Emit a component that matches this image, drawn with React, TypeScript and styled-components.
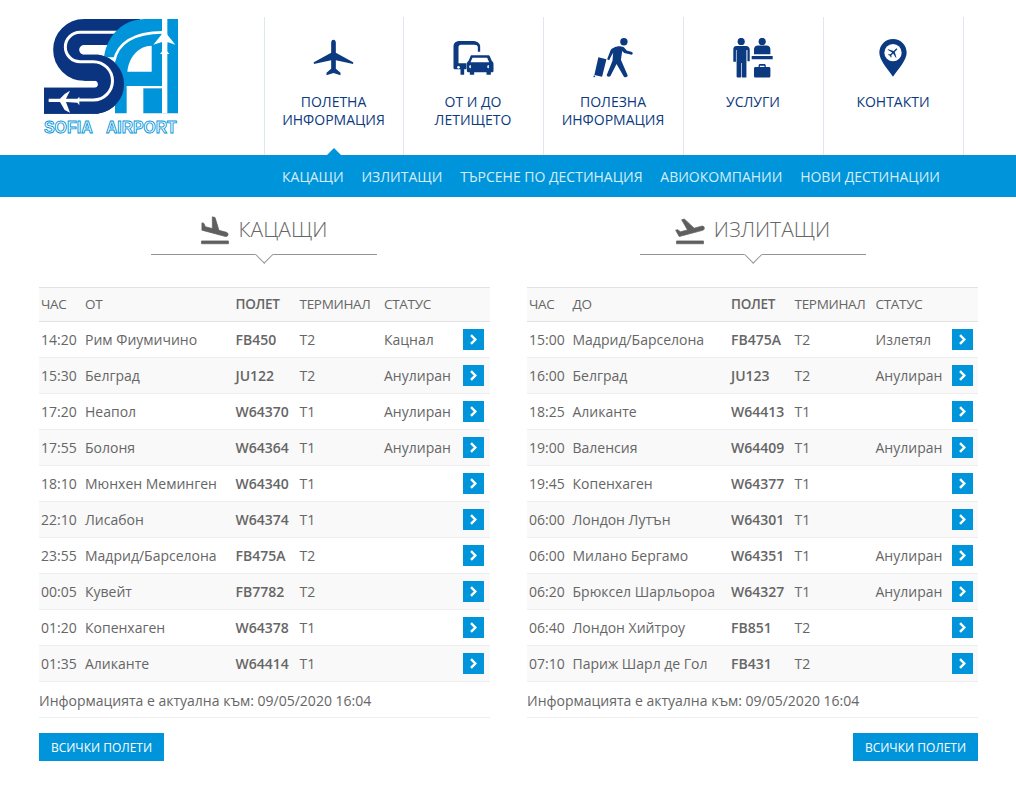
import React from "react";
import styled, { createGlobalStyle } from "styled-components";
import { MdFlightLand, MdFlightTakeoff } from "react-icons/md";

const Global = createGlobalStyle`
  html, body { margin: 0; padding: 0; background: #fff; }
  body { font-family: "Open Sans", "Liberation Sans", sans-serif; color: #666; }
  * { box-sizing: border-box; }
`;

const NAVY = "#0c3a80";
const BLUE = "#0095da";

const Page = styled.div`width: 1016px; height: 797px; overflow: hidden;`;
const Header = styled.header`display: flex; height: 155px;`;
const LogoBox = styled.a`width: 264px; padding: 19px 0 0 44px; display: block;`;
const MainNav = styled.nav`display: flex; padding-top: 17px; height: 155px;`;
const NavCell = styled.a<{ $active?: boolean; $first?: boolean; $last?: boolean }>`
  position: relative;
  width: ${(p) => (p.$first ? 139 : p.$last ? 141 : 140)}px;
  padding: 21px 1px 0 0;
  border-left: 1px solid #dfe7ee;
  ${(p) => (p.$last ? "border-right: 1px solid #dfe7ee;" : "")}
  text-align: center;
  font-size: 14px;
  line-height: 18px;
  color: ${NAVY};
  ${(p) =>
    p.$active
      ? `&::after { content: ""; position: absolute; left: 62px; bottom: 0; border: 7px solid transparent; border-top: 0; border-bottom-color: ${BLUE}; }`
      : ""}
`;
const IconSlot = styled.div`
  height: 42px;
  margin-bottom: 13px;
  display: flex;
  justify-content: center;
  align-items: flex-start;
`;
const SubNav = styled.nav`
  height: 42px;
  background: ${BLUE};
  display: flex;
  align-items: center;
  gap: 17.75px;
  padding-left: 282px;
  font-size: 14px;
  color: #d5edf9;
`;
const Columns = styled.main`
  display: grid;
  grid-template-columns: 451px 451px;
  column-gap: 37px;
  padding-left: 39px;
`;
const Column = styled.section``;
const TitleBlock = styled.div<{ $inset: number }>`
  height: 90px;
  padding-top: 18px;
  margin-left: ${(p) => p.$inset}px;
  width: 226px;
`;
const Title = styled.h2`
  margin: 0;
  height: 28px;
  padding-right: 3px;
  display: flex;
  justify-content: center;
  align-items: center;
  gap: 7px;
  font-size: 21px;
  font-weight: 300;
  line-height: 28px;
  color: #666;
  white-space: nowrap;
  svg { color: #5f5f5f; flex: none; margin-top: 3px; }
  svg path:not([fill="none"]) { stroke: #5f5f5f; stroke-width: 0.5px; }
`;
const Divider = styled.div`
  position: relative;
  height: 8px;
  margin-top: 11px;
  border-top: 1px solid #949494;
  &::after {
    content: "";
    position: absolute;
    left: 107px;
    top: -7px;
    width: 11.5px;
    height: 11.5px;
    background: #fff;
    transform: rotate(45deg);
    border-right: 1px solid #949494;
    border-bottom: 1px solid #949494;
  }
`;
const Row = styled.div<{ $cols: string; $shade?: boolean }>`
  display: grid;
  grid-template-columns: ${(p) => p.$cols};
  align-items: center;
  height: 36px;
  padding-left: 2px;
  border-bottom: 1px solid #eeeeee;
  background: ${(p) => (p.$shade ? "#f9f9f9" : "#fff")};
  font-size: 14px;
  color: #666;
  white-space: nowrap;
`;
const HeadRow = styled(Row)`
  height: 35px;
  padding-bottom: 1px;
  background: #f9f9f9;
  border-top: 1px solid #e2e2e2;
  border-bottom: 1px solid #e2e2e2;
  font-size: 13.5px;
  letter-spacing: -0.3px;
`;
const Flight = styled.span`font-weight: 600;`;
const Arrow = styled.a`
  width: 21px;
  height: 21px;
  background: ${BLUE};
  display: flex;
  align-items: center;
  justify-content: center;
  margin-bottom: 1px;
`;
const Updated = styled.div`
  height: 36px;
  padding-top: 1px;
  display: flex;
  align-items: center;
  border-bottom: 1px solid #eeeeee;
  font-size: 14px;
  color: #666;
`;
const Actions = styled.div<{ $end?: boolean }>`
  display: flex;
  justify-content: ${(p) => (p.$end ? "flex-end" : "flex-start")};
  padding-top: 15px;
`;
const AllButton = styled.a`
  width: 125px;
  height: 28px;
  background: ${BLUE};
  color: #fff;
  font-size: 12px;
  display: flex;
  align-items: center;
  justify-content: center;
`;

const Logo = () => (
  <svg width="134" height="117" viewBox="42 57 402 351" aria-label="Sofia Airport">
    <path d="M330 96H162A53 53 0 0 0 162 203H200A50 50 0 0 1 200 302H42" fill="none" stroke="#0a3380" strokeWidth="78" />
    <path d="M262 97H150A44 44 0 0 0 150 185" fill="none" stroke="#fff" strokeWidth="9" />
    <path d="M222 172C232 100 285 57 345 57H444V340H340V262H290V340H255V172Z" fill={BLUE} />
    <path d="M292 215C296 172 325 137 365 137V215Z" fill="#fff" />
    <path d="M252 184C262 130 310 97 398 97" fill="none" stroke="#fff" strokeWidth="8" />
    <rect x="396" y="57" width="16" height="283" fill="#fff" />
    <rect x="290" y="258" width="106" height="7" fill="#fff" />
    <path d="M404 70L412 104L436 134L412 126L410 152L418 162L390 162L398 152L396 126L370 134L394 104Z" fill="#fff" />
    <path d="M162 203H200A50 50 0 0 1 200 302H42" fill="none" stroke="#0a3380" strokeWidth="78" />
    <path d="M150 185H190A57.5 57.5 0 0 1 190 300H146" fill="none" stroke="#fff" strokeWidth="9" />
    <path d="M148 290V316L142 308L108 306L120 338L104 330L90 306H56V296H90L104 282L120 272L108 296L142 296Z" fill="#fff" />
    <text x="42" y="400" fontFamily="Liberation Sans, sans-serif" fontWeight="700" fontSize="47" fill="#fff" stroke={BLUE} strokeWidth="2.6" textLength="146" lengthAdjust="spacingAndGlyphs">SOFIA</text>
    <text x="228" y="400" fontFamily="Liberation Sans, sans-serif" fontWeight="700" fontSize="47" fill="#fff" stroke={BLUE} strokeWidth="2.6" textLength="212" lengthAdjust="spacingAndGlyphs">AIRPORT</text>
  </svg>
);

const PlaneIcon = () => (
  <svg width="41" height="40" viewBox="160 85 122 120">
    <path fill={NAVY} d="M221 90c-5 0-7 5-7 9v30l-52 29v5l52-11v25l-14 12v8l21-7 21 7v-8l-14-12v-25l52 11v-5l-52-29v-30c0-4-2-9-7-9z" />
  </svg>
);

const TransferIcon = () => (
  <svg width="43" height="38" viewBox="575 84 128 114">
    <path fill={NAVY} fillRule="evenodd" d="M579 110c0-12 8-17 20-17h36c14 0 22 6 24 14v18h-7v-14c-1-5-4-7-10-7h-41c-4 0-7 3-7 7v49h24v15c0 2-1 3-3 3h-4v16h-11v-16h-16c-3 0-5-2-5-4z" />
    <circle cx="594" cy="172" r="4" fill="#fff" />
    <path fill={NAVY} fillRule="evenodd" d="M633 136h50c3 0 5 2 6 5l5 12c3 2 5 5 5 9v20c0 3-2 5-5 5h-3v7h-13v-7h-37v7h-13v-7h-3c-3 0-6-2-6-5v-20c0-4 2-7 5-9l5-12c1-3 2-5 4-5zm3 7-6 14h56l-6-14zm-5 22a5 5 0 1 0 0.1 10.1zm54 0a5 5 0 1 0 0.1 10.1z" />
  </svg>
);

const WalkerIcon = () => (
  <svg width="41" height="41" viewBox="1000 84 122 122">
    <circle cx="1092" cy="95" r="11" fill={NAVY} />
    <path fill={NAVY} d="M1062 113c6-4 20-6 28-2 4 2 6 6 10 10l16 5c3 1 3 8-1 8l-22-5-6-6-4 26 20 46c1 5-7 8-11 4l-22-38-18 36c-3 4-12 2-11-3l17-42 2-24-6 10-6 12-6-3 10-26c2-4 5-6 10-8z" />
    <path fill={NAVY} d="M1016 141l24 6-13 52-23-5zM1003 194l4 6-6 1z" />
  </svg>
);

const ServicesIcon = () => (
  <svg width="42" height="41" viewBox="155 84 128 124">
    <circle cx="183" cy="94" r="11" fill={NAVY} />
    <path fill={NAVY} d="M168 108h30c6 0 11 4 11 10v36h-7v-34h-3v82c0 2-3 2-5 2h-6c-3 0-3-2-3-4v-40h-2v40c0 2 0 4-3 4h-7c-2 0-4-1-4-3v-81h-2v36h-8v-38c0-6 3-10 9-10z" />
    <circle cx="247" cy="94" r="11" fill={NAVY} />
    <path fill={NAVY} d="M234 106h26c7 0 12 5 12 12v15h-50v-15c0-7 5-12 12-12zM215 138h64v10h-64z" />
    <path fill={NAVY} fillRule="evenodd" d="M236 172v-4c0-3 2-5 5-5h12c3 0 5 2 5 5v4h9c3 0 5 2 5 5v22c0 3-2 5-5 5h-40c-3 0-5-2-5-5v-22c0-3 2-5 5-5zm4 0h14v-4h-14z" />
  </svg>
);

const PinIcon = () => (
  <svg width="28" height="39" viewBox="596 85 84 117">
    <path fill={NAVY} d="M638 88c23 0 41 18 41 41 0 22-25 49-41 72-16-23-41-50-41-72 0-23 18-41 41-41z" />
    <circle cx="638" cy="129" r="26" fill="#fff" />
    <path fill={NAVY} transform="rotate(45 638 129) translate(638 129) scale(.3) translate(-221 -147)" d="M221 90c-5 0-7 5-7 9v30l-52 29v5l52-11v25l-14 12v8l21-7 21 7v-8l-14-12v-25l52 11v-5l-52-29v-30c0-4-2-9-7-9z" />
  </svg>
);

const Chevron = () => (
  <svg width="9" height="11" viewBox="0 0 9 11">
    <path d="M2 1.2L6.3 5.5L2 9.8" fill="none" stroke="#fff" strokeWidth="2.4" />
  </svg>
);

type Item = [string, string, string, string, string];

const arrivals: Item[] = [
  ["14:20", "Рим Фиумичино", "FB450", "T2", "Кацнал"],
  ["15:30", "Белград", "JU122", "T2", "Анулиран"],
  ["17:20", "Неапол", "W64370", "T1", "Анулиран"],
  ["17:55", "Болоня", "W64364", "T1", "Анулиран"],
  ["18:10", "Мюнхен Меминген", "W64340", "T1", ""],
  ["22:10", "Лисабон", "W64374", "T1", ""],
  ["23:55", "Мадрид/Барселона", "FB475A", "T2", ""],
  ["00:05", "Кувейт", "FB7782", "T2", ""],
  ["01:20", "Копенхаген", "W64378", "T1", ""],
  ["01:35", "Аликанте", "W64414", "T1", ""],
];

const departures: Item[] = [
  ["15:00", "Мадрид/Барселона", "FB475A", "T2", "Излетял"],
  ["16:00", "Белград", "JU123", "T2", "Анулиран"],
  ["18:25", "Аликанте", "W64413", "T1", ""],
  ["19:00", "Валенсия", "W64409", "T1", "Анулиран"],
  ["19:45", "Копенхаген", "W64377", "T1", ""],
  ["06:00", "Лондон Лутън", "W64301", "T1", ""],
  ["06:00", "Милано Бергамо", "W64351", "T1", "Анулиран"],
  ["06:20", "Брюксел Шарльороа", "W64327", "T1", "Анулиран"],
  ["06:40", "Лондон Хийтроу", "FB851", "T2", ""],
  ["07:10", "Париж Шарл де Гол", "FB431", "T2", ""],
];

type BoardProps = { title: string; icon: React.ReactNode; place: string; cols: string; items: Item[]; end?: boolean; inset: number };

const Board = ({ title, icon, place, cols, items, end, inset }: BoardProps) => (
  <Column>
    <TitleBlock $inset={inset}>
      <Title>{icon}{title}</Title>
      <Divider />
    </TitleBlock>
    <HeadRow $cols={cols}>
      <span>ЧАС</span><span>{place}</span><Flight>ПОЛЕТ</Flight><span>ТЕРМИНАЛ</span><span>СТАТУС</span><span />
    </HeadRow>
    {items.map((r, i) => (
      <Row key={r[2]} $cols={cols} $shade={i % 2 === 1}>
        <span>{r[0]}</span><span>{r[1]}</span><Flight>{r[2]}</Flight><span>{r[3]}</span><span>{r[4]}</span>
        <Arrow><Chevron /></Arrow>
      </Row>
    ))}
    <Updated>Информацията е актуална към: 09/05/2020 16:04</Updated>
    <Actions $end={end}><AllButton>ВСИЧКИ ПОЛЕТИ</AllButton></Actions>
  </Column>
);

export default function App() {
  return (
    <Page>
      <Global />
      <Header>
        <LogoBox><Logo /></LogoBox>
        <MainNav>
          <NavCell $first $active><IconSlot><PlaneIcon /></IconSlot>ПОЛЕТНА<br />ИНФОРМАЦИЯ</NavCell>
          <NavCell><IconSlot><TransferIcon /></IconSlot>ОТ И ДО<br />ЛЕТИЩЕТО</NavCell>
          <NavCell><IconSlot><WalkerIcon /></IconSlot>ПОЛЕЗНА<br />ИНФОРМАЦИЯ</NavCell>
          <NavCell><IconSlot><ServicesIcon /></IconSlot>УСЛУГИ</NavCell>
          <NavCell $last><IconSlot><PinIcon /></IconSlot>КОНТАКТИ</NavCell>
        </MainNav>
      </Header>
      <SubNav>
        <span>КАЦАЩИ</span><span>ИЗЛИТАЩИ</span><span>ТЪРСЕНЕ ПО ДЕСТИНАЦИЯ</span><span>АВИОКОМПАНИИ</span><span>НОВИ ДЕСТИНАЦИИ</span>
      </SubNav>
      <Columns>
        <Board title="КАЦАЩИ" icon={<MdFlightLand size={34} />} place="ОТ" cols="44px 150.5px 64px 84.5px 79px 21px" items={arrivals} inset={112} />
        <Board title="ИЗЛИТАЩИ" icon={<MdFlightTakeoff size={34} />} place="ДО" cols="43.5px 158.5px 63.5px 81px 76.5px 21px" items={departures} end inset={113} />
      </Columns>
    </Page>
  );
}
